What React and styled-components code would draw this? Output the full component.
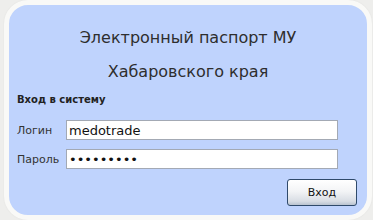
import React from "react";
import styled, { createGlobalStyle } from "styled-components";

const GlobalStyle = createGlobalStyle`
  html, body {
    margin: 0;
    padding: 0;
    background: #eeeeec;
  }
  body {
    font-family: Tahoma, "DejaVu Sans", Verdana, sans-serif;
  }
`;

function App() {
  return (
    <>
      <GlobalStyle />
      <Page>
        <Panel>
          <TitleLine>Электронный паспорт МУ</TitleLine>
          <TitleLine>Хабаровского края</TitleLine>
          <SectionHeading>Вход в систему</SectionHeading>
          <Form>
            <FieldRow>
              <FieldLabel>Логин</FieldLabel>
              <FieldInput type="text" defaultValue="medotrade" />
            </FieldRow>
            <FieldRow>
              <FieldLabel>Пароль</FieldLabel>
              <FieldInput type="password" defaultValue="123456789" />
            </FieldRow>
          </Form>
          <ButtonRow>
            <LoginButton type="button">Вход</LoginButton>
          </ButtonRow>
        </Panel>
      </Page>
    </>
  );
}

export default App;

const Page = styled.div`
  width: 373px;
  height: 220px;
  padding-left: 4px;
  box-sizing: border-box;
`;

const Panel = styled.div`
  width: 368px;
  height: 220px;
  box-sizing: border-box;
  border: 5px solid #f9f9f7;
  border-radius: 24px;
  background-color: #bfd3fd;
  box-shadow: 0 0 2px rgba(0, 0, 0, 0.06);
  padding-top: 16px;
  display: flex;
  flex-direction: column;
`;

const TitleLine = styled.div`
  height: 34px;
  line-height: 34px;
  text-align: center;
  font-size: 16px;
  color: #2e2e2e;
`;

const SectionHeading = styled.div`
  margin-top: 4px;
  padding-left: 8px;
  font-size: 10px;
  line-height: 14px;
  font-weight: bold;
  color: #222222;
`;

const Form = styled.div`
  margin-top: 13px;
  padding-left: 8px;
  padding-right: 29px;
  display: flex;
  flex-direction: column;
  gap: 9px;
`;

const FieldRow = styled.div`
  display: flex;
  align-items: center;
`;

const FieldLabel = styled.span`
  width: 49px;
  font-size: 11px;
  color: #333333;
`;

const FieldInput = styled.input`
  flex: 1;
  height: 20px;
  box-sizing: border-box;
  border: 1px solid #a3a9b4;
  background: #ffffff;
  padding: 0 2px;
  font-family: Tahoma, "DejaVu Sans", Verdana, sans-serif;
  font-size: 13px;
  color: #111111;
  outline: none;
`;

const ButtonRow = styled.div`
  margin-top: 10px;
  padding-right: 10px;
  display: flex;
  justify-content: flex-end;
`;

const LoginButton = styled.button`
  width: 70px;
  height: 27px;
  box-sizing: border-box;
  border: 1px solid #2f4a6b;
  border-radius: 3px;
  background: linear-gradient(#ffffff 0%, #f3f4f6 45%, #d8dde4 85%, #b9c3d0 100%);
  font-family: Tahoma, "DejaVu Sans", Verdana, sans-serif;
  font-size: 11px;
  color: #111111;
  padding: 0;
`;
